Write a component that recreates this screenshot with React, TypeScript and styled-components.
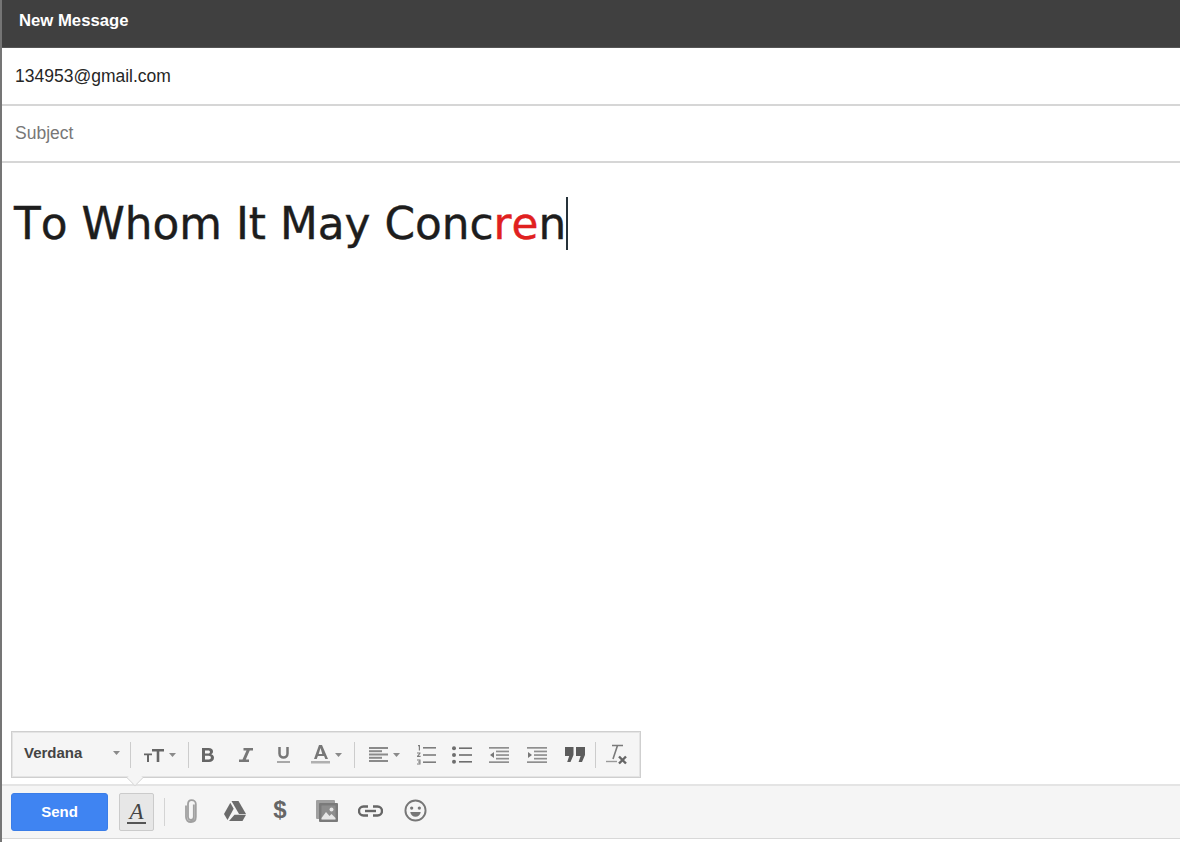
import { createGlobalStyle, styled } from "styled-components";

const GlobalStyle = createGlobalStyle`
  html, body {
    margin: 0;
    padding: 0;
    background: #fff;
  }
  * {
    box-sizing: border-box;
  }
`;

const Compose = styled.div`
  width: 1180px;
  height: 842px;
  display: flex;
  flex-direction: column;
  border-left: 2px solid #757575;
  background: #fff;
  font-family: "Liberation Sans", Arial, sans-serif;
  overflow: hidden;
`;

const TitleBar = styled.div`
  height: 48px;
  flex: none;
  display: flex;
  align-items: center;
  padding: 0 0 6px 17px;
  background: #404040;
  border-bottom: 1px solid #555;
  color: #fff;
  font-size: 16.7px;
  font-weight: 700;
`;

const Field = styled.div<{ $muted?: boolean; $h: number }>`
  height: ${(p) => p.$h}px;
  flex: none;
  display: flex;
  align-items: center;
  padding: 0 0 0 13px;
  border-bottom: 2px solid #d6d6d6;
  color: ${(p) => (p.$muted ? "#777" : "#262626")};
  font-size: 17.5px;
`;

const Body = styled.div`
  flex: 1;
  padding: 33px 0 0 12px;
  font-family: "DejaVu Sans", Verdana, sans-serif;
  font-size: 43.8px;
  font-kerning: none;
  -webkit-text-stroke: 0.4px currentColor;
  line-height: 56px;
  color: #1d1d1d;
  white-space: nowrap;
`;

const Typo = styled.span`
  color: #e02020;
`;

const Caret = styled.span`
  display: inline-block;
  width: 2px;
  height: 53px;
  background: #26323a;
  vertical-align: -11px;
`;

const FormatBar = styled.div`
  position: relative;
  width: 630px;
  height: 47px;
  flex: none;
  margin-left: 9px;
  display: flex;
  align-items: center;
  background: #f5f5f5;
  border: 1px solid #cfcfcf;
  box-shadow: 0 0 0 1px #e4e4e4 inset;
`;

const Pointer = styled.div`
  position: absolute;
  left: 115px;
  bottom: -9px;
  width: 16px;
  height: 16px;
  transform: rotate(45deg) scale(0.72);
  background: #f5f5f5;
  border-right: 1px solid #d4d4d4;
  border-bottom: 1px solid #d4d4d4;
`;

const FontName = styled.div`
  width: 118px;
  height: 100%;
  display: flex;
  align-items: center;
  justify-content: space-between;
  padding: 0 10px 4px 12px;
  color: #444;
  font-size: 15px;
  font-weight: 700;
`;

const Tool = styled.div<{ $w: number; $left?: number; $right?: number }>`
  width: ${(p) => p.$w}px;
  height: 100%;
  flex: none;
  display: flex;
  align-items: center;
  justify-content: center;
  gap: 5px;
  padding-left: ${(p) => p.$left ?? 0}px;
  padding-right: ${(p) => p.$right ?? 0}px;
  color: #666;
`;

const Divider = styled.div`
  width: 1px;
  height: 26px;
  flex: none;
  background: #cccccc;
`;

const ActionBar = styled.div`
  height: 55px;
  flex: none;
  margin-top: 6px;
  margin-bottom: 3px;
  display: flex;
  align-items: center;
  padding: 0 0 0 9px;
  background: #f5f5f5;
  border-top: 2px solid #e4e4e4;
  border-bottom: 1px solid #d8d8d8;
`;

const SendButton = styled.div`
  width: 97px;
  height: 38px;
  display: flex;
  align-items: center;
  justify-content: center;
  padding-bottom: 2px;
  border-radius: 3px;
  background: #3f84f2;
  border: 1px solid #3a7de8;
  color: #fff;
  font-size: 15px;
  font-weight: 700;
`;

const FormatToggle = styled.div`
  width: 35px;
  height: 38px;
  margin-left: 11px;
  display: flex;
  align-items: center;
  justify-content: center;
  border-radius: 2px;
  background: #e7e7e7;
  border: 1px solid #cbcbcb;
`;

const ToggleLetter = styled.span`
  display: block;
  padding: 0 2px;
  border-bottom: 2px solid #555;
  color: #444;
  font-family: "Liberation Serif", "Times New Roman", serif;
  font-size: 23px;
  font-style: italic;
  line-height: 21px;
`;

const BarDivider = styled.div`
  width: 1px;
  height: 28px;
  margin: 0 3px 0 10px;
  background: #d4d4d4;
`;

const Action = styled.div<{ $w: number }>`
  width: ${(p) => p.$w}px;
  height: 38px;
  flex: none;
  display: flex;
  align-items: center;
  justify-content: center;
  padding-bottom: 3px;
  color: #6b6b6b;
`;

const DollarText = styled.span`
  font-family: "Liberation Sans", Arial, sans-serif;
  font-size: 24px;
  font-weight: 700;
  color: #666;
  padding-bottom: 2px;
`;

const Arrow = () => (
  <svg width="7" height="4" viewBox="0 0 7 4">
    <path d="M0 0h7L3.500 4z" fill="#8a8a8a" />
  </svg>
);

const TextSizeIcon = () => (
  <svg width="20" height="16" viewBox="0 0 20 16" fill="currentColor">
    <path d="M8 2h12v2.400h-4.700V15h-2.600V4.400H8z" />
    <path d="M0 6.500h8v1.700H5V15H3V8.200H0z" />
  </svg>
);

const BoldIcon = () => (
  <svg width="12" height="14" viewBox="0 0 12 14" fill="currentColor">
    <path
      fillRule="evenodd"
      d="M0 0h6.500c3 0 4.500 1.300 4.500 3.500 0 1.300-.7 2.300-1.800 2.800C10.800 6.800 12 8 12 9.800 12 12.500 10 14 7 14H0zm3 2.400v3h3.200c1.200 0 1.800-.6 1.800-1.500s-.6-1.500-1.800-1.500zm0 5.300v3.900h3.700c1.400 0 2.200-.8 2.200-2s-.8-1.900-2.200-1.900z"
    />
  </svg>
);

const ItalicIcon = () => (
  <svg width="14" height="14" viewBox="0 0 14 14" fill="#777">
    <path d="M4.500 0H14v2.400h-3.300L6.800 11.600H10V14H0v-2.400h3.500L7.500 2.400H4.500z" />
  </svg>
);

const UnderlineIcon = () => (
  <svg width="13" height="16" viewBox="0 0 13 16" fill="none" stroke="#777">
    <path d="M2.500 0v6.500c0 5.300 8 5.300 8 0V0" strokeWidth="2.500" />
    <path d="M0 15h13" strokeWidth="2" stroke="#a8a8a8" />
  </svg>
);

const ColorIcon = () => (
  <svg width="19" height="19" viewBox="0 0 19 19" fill="#777">
    <path
      fillRule="evenodd"
      d="M8 0h3l6 14h-2.700l-1.200-3H6.900l-1.200 3H3zm1.500 2.900L7.700 9h3.600z"
    />
    <rect y="16" width="19" height="2.500" fill="#b0b0b0" />
  </svg>
);

const AlignIcon = () => (
  <svg width="19" height="15" viewBox="0 0 19 15" fill="#8a8a8a">
    <rect width="19" height="2" />
    <rect y="3.200" width="13" height="2" />
    <rect y="6.500" width="19" height="2" />
    <rect y="9.800" width="13" height="2" />
    <rect y="13" width="19" height="2" />
  </svg>
);

const NumberedIcon = () => (
  <svg width="20" height="20" viewBox="0 0 20 20" fill="#7d7d7d">
    <path d="M2 0h2v5.500H2.800V1.300H2zM1 7.500h3.500v1L2.600 10.800h2V12H1v-1l2.200-2.500H1zM1 14.500h3.500v5H1v-1h2.400v-1H2v-1h1.400v-1H1z" />
    <rect x="7" y="2" width="13" height="1.600" />
    <rect x="7" y="9.200" width="13" height="1.600" />
    <rect x="7" y="16.400" width="13" height="1.600" />
  </svg>
);

const BulletIcon = () => (
  <svg width="20" height="18" viewBox="0 0 20 18" fill="#6e6e6e">
    <circle cx="2" cy="2.200" r="2" />
    <circle cx="2" cy="9" r="2" />
    <circle cx="2" cy="15.800" r="2" />
    <rect x="7" y="1.400" width="13" height="1.600" />
    <rect x="7" y="8.200" width="13" height="1.600" />
    <rect x="7" y="15" width="13" height="1.600" />
  </svg>
);

const IndentIcon = ({ more }: { more?: boolean }) => (
  <svg width="20" height="16" viewBox="0 0 20 16" fill="#8f8f8f">
    <rect width="20" height="1.700" />
    <rect x="7" y="3.600" width="13" height="1.700" />
    <rect x="7" y="7.200" width="13" height="1.700" />
    <rect x="7" y="10.800" width="13" height="1.700" />
    <rect y="14.300" width="20" height="1.700" />
    <path d={more ? "M1 5l4 3-4 3z" : "M5 5L1 8l4 3z"} fill="#777" />
  </svg>
);

const QuoteIcon = () => (
  <svg width="20" height="15" viewBox="0 0 20 15" fill="#5c5c5c">
    <path d="M0 0h8.500v8L5.500 15H2.200l2-6H0zM11 0h9v8l-3 7h-3.400l2-6H11z" />
  </svg>
);

const ClearIcon = () => (
  <svg width="22" height="22" viewBox="0 0 22 22" fill="none">
    <path d="M6 1.500h11M11.500 1.500L7 15" stroke="#7a7a7a" strokeWidth="1.600" />
    <path d="M0 17.500h11" stroke="#999" strokeWidth="1.400" />
    <path d="M13 12.500l7 7M20 12.500l-7 7" stroke="#666" strokeWidth="2.400" />
  </svg>
);

const ClipIcon = () => (
  <svg width="14" height="24" viewBox="0 0 14 24" fill="none" stroke="#a0a0a0" strokeWidth="1.800">
    <path d="M9.800 5.500v12.500c0 1.900-1.200 3-2.900 3s-2.900-1.100-2.900-3V5c0-2.400 1.400-3.800 3.600-3.800S11.800 2.600 11.800 5v13c0 3.300-2.100 5-4.900 5S2 21.300 2 18V6.500" />
  </svg>
);

const DriveIcon = () => (
  <svg width="22" height="20" viewBox="0 0 22 20" fill="#6b6b6b">
    <path d="M7.500 0h7l7.500 13h-7z" />
    <path d="M6.300 1.800l3.400 6L3.500 19 0 13z" />
    <path d="M10.500 13.800H22L18.500 20H5z" />
  </svg>
);

const PhotoIcon = () => (
  <svg width="22" height="22" viewBox="0 0 22 22">
    <rect width="19" height="19" rx="1" fill="#a0a0a0" />
    <rect x="3" y="3" width="19" height="19" rx="1" fill="#7a7a7a" />
    <rect x="5.500" y="5.500" width="14" height="14" fill="#8d8d8d" />
    <circle cx="15.500" cy="9.500" r="2" fill="#e6e6e6" />
    <path d="M5.500 18l4.500-6 3.500 4 2-2 4 4v1.500h-14z" fill="#e6e6e6" />
  </svg>
);

const LinkIcon = () => (
  <svg width="25" height="12" viewBox="0 0 25 12" fill="none" stroke="#666" strokeWidth="2.400">
    <path d="M10 1.500H5.500a4.500 4.500 0 0 0 0 9H10" />
    <path d="M15 1.500h4.500a4.500 4.500 0 0 1 0 9H15" />
    <path d="M7 6h11" />
  </svg>
);

const SmileIcon = () => (
  <svg width="23" height="23" viewBox="0 0 24 24">
    <circle cx="12" cy="12" r="10.500" fill="none" stroke="#777" strokeWidth="2" />
    <circle cx="8" cy="9.500" r="1.700" fill="#777" />
    <circle cx="16" cy="9.500" r="1.700" fill="#777" />
    <path d="M6.500 13.500h11c-.5 3.300-2.800 5-5.500 5s-5-1.700-5.500-5z" fill="#777" />
  </svg>
);

export default function App() {
  return (
    <>
      <GlobalStyle />
      <Compose>
        <TitleBar>New Message</TitleBar>
        <Field $h={58}>134953@gmail.com</Field>
        <Field $h={57} $muted>
          Subject
        </Field>
        <Body>
          To Whom It May Conc<Typo>re</Typo>n
          <Caret />
        </Body>
        <FormatBar>
          <FontName>
            Verdana
            <Arrow />
          </FontName>
          <Divider />
          <Tool $w={57}>
            <TextSizeIcon />
            <Arrow />
          </Tool>
          <Divider />
          <Tool $w={38}>
            <BoldIcon />
          </Tool>
          <Tool $w={38}>
            <ItalicIcon />
          </Tool>
          <Tool $w={37}>
            <UnderlineIcon />
          </Tool>
          <Tool $w={52} $right={4}>
            <ColorIcon />
            <Arrow />
          </Tool>
          <Divider />
          <Tool $w={52} $left={6}>
            <AlignIcon />
            <Arrow />
          </Tool>
          <Tool $w={37}>
            <NumberedIcon />
          </Tool>
          <Tool $w={36}>
            <BulletIcon />
          </Tool>
          <Tool $w={38}>
            <IndentIcon />
          </Tool>
          <Tool $w={38}>
            <IndentIcon more />
          </Tool>
          <Tool $w={39} $right={2}>
            <QuoteIcon />
          </Tool>
          <Divider />
          <Tool $w={41}>
            <ClearIcon />
          </Tool>
          <Pointer />
        </FormatBar>
        <ActionBar>
          <SendButton>Send</SendButton>
          <FormatToggle>
            <ToggleLetter>A</ToggleLetter>
          </FormatToggle>
          <BarDivider />
          <Action $w={45}>
            <ClipIcon />
          </Action>
          <Action $w={44}>
            <DriveIcon />
          </Action>
          <Action $w={46}>
            <DollarText>$</DollarText>
          </Action>
          <Action $w={47}>
            <PhotoIcon />
          </Action>
          <Action $w={41}>
            <LinkIcon />
          </Action>
          <Action $w={49}>
            <SmileIcon />
          </Action>
        </ActionBar>
      </Compose>
    </>
  );
}
